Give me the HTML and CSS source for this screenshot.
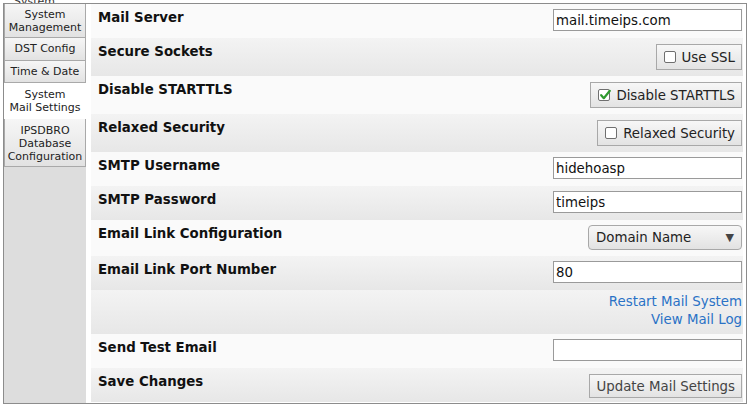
FILE: index.html
```html
<!DOCTYPE html>
<html>
<head>
<meta charset="utf-8">
<link rel="stylesheet" href="styles.css">
</head>
<body>
<div class="cut">System</div>
<div class="frame">
  <nav class="sidebar">
    <div class="tab">System<br>Management</div>
    <div class="tab">DST Config</div>
    <div class="tab">Time &amp; Date</div>
    <div class="tab active">System<br>Mail Settings</div>
    <div class="tab">IPSDBRO<br>Database<br>Configuration</div>
  </nav>
  <main class="content">
    <div class="row light r-in">
      <div class="label">Mail Server</div>
      <div class="ctrl"><input class="field" type="text" value="mail.timeips.com"></div>
    </div>
    <div class="row grey r-btn">
      <div class="label">Secure Sockets</div>
      <div class="ctrl"><label class="btn"><span class="cb"></span>Use SSL</label></div>
    </div>
    <div class="row light r-btn">
      <div class="label">Disable STARTTLS</div>
      <div class="ctrl"><label class="btn"><span class="cb checked"><svg viewBox="0 0 12 12" width="12" height="12"><path d="M2.2 6.2 L4.8 9.2 L10.8 1.8" fill="none" stroke="#2f9a2f" stroke-width="2.2" stroke-linecap="round" stroke-linejoin="round"/></svg></span>Disable STARTTLS</label></div>
    </div>
    <div class="row grey r-btn">
      <div class="label">Relaxed Security</div>
      <div class="ctrl"><label class="btn"><span class="cb"></span>Relaxed Security</label></div>
    </div>
    <div class="row light r-in">
      <div class="label">SMTP Username</div>
      <div class="ctrl"><input class="field" type="text" value="hidehoasp"></div>
    </div>
    <div class="row grey r-in">
      <div class="label">SMTP Password</div>
      <div class="ctrl"><input class="field" type="text" value="timeips"></div>
    </div>
    <div class="row light r-sel">
      <div class="label">Email Link Configuration</div>
      <div class="ctrl"><div class="select"><span>Domain Name</span><span class="arrow">&#9660;</span></div></div>
    </div>
    <div class="row grey r-port">
      <div class="label">Email Link Port Number</div>
      <div class="ctrl"><input class="field" type="text" value="80"></div>
    </div>
    <div class="row grey r-links">
      <div class="links">
        <a href="#">Restart Mail System</a>
        <a href="#">View Mail Log</a>
      </div>
    </div>
    <div class="row light r-in">
      <div class="label">Send Test Email</div>
      <div class="ctrl"><input class="field" type="text" value=""></div>
    </div>
    <div class="row grey r-save">
      <div class="label">Save Changes</div>
      <div class="ctrl"><button class="btn plain" type="button">Update Mail Settings</button></div>
    </div>
  </main>
</div>
</body>
</html>
```

FILE: styles.css
```css
html, body {
  margin: 0;
  padding: 0;
  background: #ffffff;
  font-family: "DejaVu Sans", "Liberation Sans", sans-serif;
  color: #111;
  overflow: hidden;
}
.cut {
  height: 3px;
  overflow: hidden;
  font-size: 11px;
  line-height: 3px;
  padding-left: 14px;
  color: #333;
  display: flex;
  align-items: flex-end;
}
.frame {
  margin: 0 3px 0 3px;
  width: 744px;
  height: 401px;
  box-sizing: border-box;
  border: 1px solid #8c8c8c;
  display: flex;
  background: #fff;
}
.sidebar {
  width: 82px;
  flex: none;
  background: #dddddd;
  display: flex;
  flex-direction: column;
  align-items: flex-start;
}
.tab {
  width: 82px;
  box-sizing: border-box;
  border: 1px solid #a9a9a9;
  border-top: none;
  background: linear-gradient(#f6f6f6, #e2e2e2);
  font-size: 11px;
  line-height: 13px;
  text-align: center;
  color: #222;
  padding: 4px 2px 4px;
}
.tab:first-child { border-top: none; padding-top: 4px; height: 34px; }
.tab:nth-child(2) { height: 23px; padding-top: 4px; }
.tab:nth-child(3) { height: 22px; padding-top: 4px; }
.tab.active {
  background: #ffffff;
  border-color: #ffffff;
  height: 36px;
  padding-top: 5px;
  width: 82px;
}
.tab:nth-child(5) { height: 48px; padding-top: 5px; }
.content {
  flex: 1;
  padding: 0 3px 0 5px;
  display: flex;
  flex-direction: column;
}
.row {
  display: flex;
  justify-content: space-between;
  align-items: flex-start;
  padding-left: 7px;
  padding-right: 1px;
  box-sizing: border-box;
}
.light { background: #fafafa; }
.grey { background: linear-gradient(#f3f3f3, #e7e7e7); }
.label {
  font-weight: bold;
  font-size: 13.33px;
  line-height: 15px;
  color: #111;
  white-space: nowrap;
}
.r-in { height: 34px; padding-top: 5px; }
.r-in .label { padding-top: 1px; }
.r-btn { height: 38px; padding-top: 6px; }
.r-btn .label { padding-top: 0px; }
.r-sel { height: 36px; padding-top: 5px; }
.r-sel .label { padding-top: 1px; }
.r-port { height: 34px; padding-top: 5px; }
.r-port .label { padding-top: 1px; }
.r-save { height: 34px; padding-top: 6px; }
.r-save .label { padding-top: 0px; }
.r-links { height: 44px; padding-top: 3px; justify-content: flex-end; }
.ctrl { display: flex; }
.field {
  width: 189px;
  height: 22px;
  box-sizing: border-box;
  border: 1px solid #9a9a9a;
  background: #fff;
  font-family: "DejaVu Sans", sans-serif;
  font-size: 13.33px;
  padding: 0 2px;
  margin: 0;
  color: #111;
  outline: none;
}
.btn {
  height: 26px;
  box-sizing: border-box;
  border: 1px solid #a8a8a8;
  background: linear-gradient(#f7f7f7, #e3e3e3);
  display: flex;
  align-items: center;
  gap: 6px;
  padding: 0 6px 0 7px;
  font-family: "DejaVu Sans", sans-serif;
  font-size: 13.33px;
  color: #222;
  white-space: nowrap;
}
.btn.plain {
  height: 24px;
  padding: 0 6px 0 7px;
  margin: 0;
  color: #444;
}
.cb {
  width: 12px;
  height: 12px;
  box-sizing: border-box;
  border: 1px solid #6f6f6f;
  border-radius: 2px;
  background: #fff;
  position: relative;
  flex: none;
}
.cb svg {
  position: absolute;
  left: 0;
  top: -1px;
}
.select {
  width: 154px;
  height: 25px;
  box-sizing: border-box;
  border: 1px solid #a8a8a8;
  border-radius: 4px;
  background: linear-gradient(#f7f7f7, #e2e2e2);
  display: flex;
  align-items: center;
  justify-content: space-between;
  padding: 0 7px 0 7px;
  font-size: 13.33px;
  color: #222;
}
.arrow {
  font-size: 11px;
  color: #444;
}
.links {
  display: flex;
  flex-direction: column;
  align-items: flex-end;
  font-size: 13.33px;
  line-height: 18px;
}
.links a {
  color: #2a72c6;
  text-decoration: none;
}
```
